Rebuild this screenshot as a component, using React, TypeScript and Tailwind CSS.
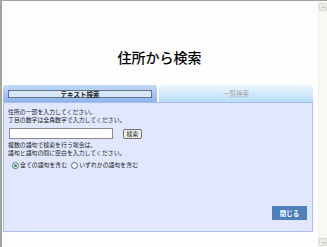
import React from "react";

const jp = { fontFamily: '"Noto Sans CJK JP", "Noto Sans", sans-serif' };

function Radio({ checked }: { checked?: boolean }) {
  return (
    <span className="inline-flex h-[7px] w-[7px] items-center justify-center rounded-full border border-[#3c6a9c] bg-white">
      {checked && <span className="h-[3px] w-[3px] rounded-full bg-[#2a9a2a]" />}
    </span>
  );
}

export default function App() {
  return (
    <div className="flex h-[247px] w-[327px] overflow-hidden border-l-2 border-t border-[#a3a39c] bg-[#fefefe]" style={jp}>
      <div className="flex w-[316px] flex-col pl-[1px]">
        <div className="flex h-[84px] items-end justify-center pb-[19px] pr-[2px]">
          <h1 className="text-[14px] font-medium leading-[18px] text-black">住所から検索</h1>
        </div>
        <div className="flex w-[310px] gap-[2px]">
          <div className="flex h-[17px] w-[154px] items-center rounded-t-[3px] bg-gradient-to-b from-[#c4daf8] to-[#8db4ee] px-[5px] pt-[1px]">
            <div className="flex h-[8px] w-full items-center justify-center border border-[#6a7384] bg-[#d8e8fb]">
              <span className="text-[6.5px] font-bold leading-none text-[#222]">テキスト検索</span>
            </div>
          </div>
          <div className="flex h-[17px] w-[154px] items-center justify-center rounded-t-[3px] bg-gradient-to-b from-[#eef7fe] to-[#b7dcf9]">
            <span className="text-[6.5px] leading-none text-[#a6a6a6]">一覧検索</span>
          </div>
        </div>
        <div className="flex h-[130px] w-[310px] flex-col border border-[#a9bcf6] bg-[#e1e7fe] px-[4px] pt-[5px] text-[5.9px] leading-[8px] text-[#222]">
          <p>住所の一部を入力してください。</p>
          <p>丁目の数字は全角数字で入力してください。</p>
          <div className="mt-[4px] flex items-end gap-[10px] pl-[1px]">
            <div className="h-[11px] w-[104px] border border-[#8a8a8a] bg-white" />
            <button className="flex h-[10px] w-[19px] items-center justify-center rounded-[2px] border border-[#707070] bg-[#f1f1ec] text-[5.9px] leading-none text-[#222]">
              検索
            </button>
          </div>
          <p className="mt-[2px]">複数の語句で検索を行う場合は、</p>
          <p>語句と語句の間に空白を入力してください。</p>
          <div className="mt-[4px] flex items-center gap-[1px] pl-[4px]">
            <Radio checked />
            <span className="mr-[3px]">全ての語句を含む</span>
            <Radio />
            <span>いずれかの語句を含む</span>
          </div>
          <div className="mt-auto mb-[10px] flex justify-end">
            <button className="flex h-[16px] w-[37px] items-center justify-center border border-[#dfe7f5] bg-[#4c7fbb] text-[6.5px] font-bold leading-none text-white">
              閉じる
            </button>
          </div>
        </div>
      </div>
      <div className="flex w-[9px] flex-col justify-between border-l border-[#efefe8] bg-[#f8f8f4] pt-[2px]">
        <div className="flex h-[8px] w-[8px] items-center justify-center rounded-[1px] border border-[#dadad2] bg-[#f0f0ea]">
          <svg width="5" height="3" viewBox="0 0 5 3"><path d="M0.5 2.5 L2.5 0.5 L4.5 2.5" stroke="#b0b0a8" fill="none" strokeWidth="1" /></svg>
        </div>
        <div className="mb-[1px] flex h-[8px] w-[8px] items-center justify-center rounded-[1px] border border-[#dadad2] bg-[#f0f0ea]">
          <svg width="5" height="3" viewBox="0 0 5 3"><path d="M0.5 0.5 L2.5 2.5 L4.5 0.5" stroke="#b0b0a8" fill="none" strokeWidth="1" /></svg>
        </div>
      </div>
    </div>
  );
}
